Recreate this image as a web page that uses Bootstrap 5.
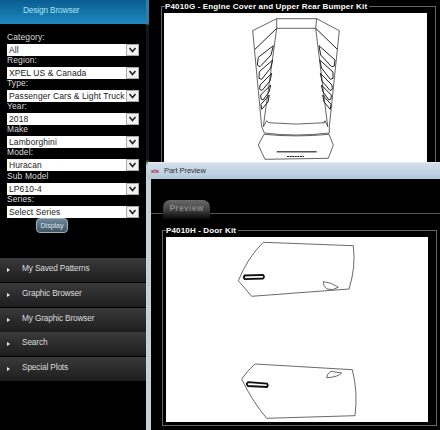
<!DOCTYPE html>
<html lang="en">
<head>
    <meta charset="UTF-8">
    <title>Design Browser</title>
    <link href="https://cdn.jsdelivr.net/npm/bootstrap@5.3.0/dist/css/bootstrap.min.css" rel="stylesheet">
    <style>
        html, body { height: 100%; margin: 0; }
        body { background: #000; font-family: "Liberation Sans", sans-serif; overflow: hidden; position: relative; width: 440px; height: 430px; }
        .app { height: 430px; }
        .side { width: 146px; background: #000; flex: none; }
        .side-head { height: 24px; background: linear-gradient(#0b5d92, #1d8ac0); color: #a9e4f2; font-size: 8.3px; letter-spacing: -.15px; line-height: 21px; padding-left: 23px; }
        .side-form { padding: 9px 7px 0; height: 234px; }
        .side-form label { display: block; color: #ddd; font-size: 8.5px; line-height: 9px; height: 11px; letter-spacing: .1px; }
        .side-form select { display: block; width: 132px; height: 12px; padding: 0 14px 0 2px; border: 0; border-radius: 0; font-family: "Liberation Sans", sans-serif; font-size: 8.5px; letter-spacing: .1px; line-height: 12px; color: #222; background-color: #fff; background-position: right 0 center; background-size: 13px 12px; background-image: url("data:image/svg+xml,%3Csvg xmlns='http://www.w3.org/2000/svg' viewBox='0 0 13 12'%3E%3Crect x='.5' y='.5' width='12' height='11' fill='%23f2f2f2' stroke='%23aaa'/%3E%3Cpath d='M3.5 4l3 3.5 3-3.5' fill='none' stroke='%23222' stroke-width='1.6'/%3E%3C/svg%3E"); }
        .sel-row { height: 23.1px; }
        .display-btn { width: 32px; height: 15px; margin: 0 0 0 29px; padding: 0; display: block; border: 1px solid #9fb0bd; border-radius: 4px; background: linear-gradient(#6e8798, #3e5565); color: #dfe6ea; font-size: 7px; line-height: 13px; }
        .side-menu .list-group-item { height: 24px; margin-bottom: .8px; padding: 0 0 0 22px; border: 0; border-radius: 0; background: linear-gradient(#3a3a3a, #1d1d1d); color: #ddd; font-size: 8.3px; letter-spacing: -.15px; line-height: 20px; position: relative; }
        .side-menu .list-group-item::before { content: ""; position: absolute; left: 7px; top: 10px; border-left: 3px solid #eee; border-top: 2px solid transparent; border-bottom: 2px solid transparent; }
        .strip { width: 3px; flex: none; background: linear-gradient(#2a80b0 0, #2a80b0 24px, #10181c 25px, #10181c 160px, #c7d2da 165px, #c7d2da 100%); }
        .main { flex: 1; padding: 0 4px 0 12px; }
        .kit-box { border: 1px solid #666; margin: 0; position: relative; }
        .kit-title { position: absolute; left: 3px; top: -6px; background: #000; color: #fff; font-weight: 700; font-size: 8px; letter-spacing: .15px; line-height: 11px; padding: 0 2px 0 0; white-space: nowrap; }
        .kit-sheet { background: #fff; }
        .kit-sheet svg { display: block; }
        .top-kit { margin-top: 6px; height: 170px; padding: 0 8px 0 2px; }
        .top-kit .kit-sheet { margin-top: 6px; height: 149px; }
        .win { position: absolute; left: 148px; top: 162px; width: 292px; height: 268px; background: #000; border-left: 3px solid #c3d1dd; }
        .win-title { height: 17px; margin-left: -3px; background: linear-gradient(#d2dfec, #b4c8dc); border-top: 1px solid #e8eef4; color: #333; font-size: 7.6px; letter-spacing: -.1px; line-height: 16px; padding-left: 16px; position: relative; }
        .win-logo { position: absolute; left: 3px; top: 3px; color: #b22; font-size: 6px; font-weight: 700; line-height: 10px; }
        .tab-bar { height: 35px; border-bottom: 1px solid #555; padding: 21px 0 0 12px; }
        .tab-pill { display: block; width: 47px; height: 20px; border-radius: 7px 7px 0 0; background: linear-gradient(#6a6a6a 0, #3a3a3a 55%, #000 100%); color: #888; font-size: 8.5px; font-weight: 700; letter-spacing: .3px; line-height: 16px; text-align: center; }
        .door-kit { margin: 16px 3px 0 11px; height: 196px; padding: 0 8px 0 3px; }
        .door-kit .kit-sheet { margin-top: 6px; height: 185px; }
    </style>
</head>
<body>
    <div class="app d-flex">
        <div class="side">
            <div class="side-head">Design Browser</div>
            <div class="side-form">
                <div class="sel-row"><label>Category:</label><select class="form-select"><option>All</option></select></div>
                <div class="sel-row"><label>Region:</label><select class="form-select"><option>XPEL US &amp; Canada</option></select></div>
                <div class="sel-row"><label>Type:</label><select class="form-select"><option>Passenger Cars &amp; Light Trucks</option></select></div>
                <div class="sel-row"><label>Year:</label><select class="form-select"><option>2018</option></select></div>
                <div class="sel-row"><label>Make</label><select class="form-select"><option>Lamborghini</option></select></div>
                <div class="sel-row"><label>Model:</label><select class="form-select"><option>Huracan</option></select></div>
                <div class="sel-row"><label>Sub Model</label><select class="form-select"><option>LP610-4</option></select></div>
                <div class="sel-row"><label>Series:</label><select class="form-select"><option>Select Series</option></select></div>
                <button class="btn display-btn" type="button">Display</button>
            </div>
            <div class="list-group side-menu">
                <div class="list-group-item">My Saved Patterns</div>
                <div class="list-group-item">Graphic Browser</div>
                <div class="list-group-item">My Graphic Browser</div>
                <div class="list-group-item">Search</div>
                <div class="list-group-item">Special Plots</div>
            </div>
        </div>
        <div class="strip"></div>
        <div class="main">
            <div class="kit-box top-kit">
                <div class="kit-title">P4010G - Engine Cover and Upper Rear Bumper Kit</div>
                <div class="kit-sheet">
                    <svg width="263" height="149" viewBox="164 13 263 149" fill="none" stroke="#222" stroke-width=".7">
                        <!-- engine cover outline -->
                        <path d="M252.7 30.7 L276.7 18.7 L316.7 18.7 L339.3 30.7 L329.3 126.7 L329.3 133 Q296 137 264.3 133 L261.7 126.7 Z"/>
                        <path d="M276.7 28.3 L315.7 28.3 M276.7 18.7 L276.7 28.3 L263.3 126.7 M316.7 18.7 L315.7 28.3 L327.7 126.7"/>
                        <path d="M276.7 28.3 L255 49.3 M315.7 28.3 L337.3 49.3" stroke-width="1"/>
                        <!-- vents left -->
                        <path d="M273.3 45.7 L258.3 57.3 L257.3 65 L260 66.7 L271 55 Z M272.7 60 L259.3 71.7 L259 78.3 L261.7 79.3 L270.5 68 Z M271.7 73.3 L260 85 L259.7 89.3 L262 90.5 L270 81 Z M270.7 85 L260.7 95 L261 99 L263 100 L269 92 Z M269.3 95 L261 104.3 L261.7 109.3 L268 102 Z" stroke-width="1"/>
                        <!-- vents right -->
                        <path d="M319 45.7 L335 60 L334.3 66 L331.7 66.7 L320.7 55 Z M319.7 60 L333 72 L333 78.3 L330.3 79.3 L321.5 68 Z M320.3 73.3 L332 85 L332.3 89.3 L330 90.5 L322 81 Z M321.3 85 L331.3 95 L331 99 L329 100 L323 92 Z M322.7 95 L331 104.3 L330.3 109.3 L324 102 Z" stroke-width="1"/>
                        <!-- bumper lip -->
                        <path d="M266.7 120.7 L263.3 126.7 M325 120.7 L328 126.7 M268.3 122.7 Q296 125.5 325 122.7 M266.7 120.7 L268.3 122.7 M325 120.7 L323.7 122.7"/>
                        <path d="M264 134.3 Q296 137.5 329 134.3 L333.3 145 L328.3 158.3 L265 159.3 L258.3 145 Z"/>
                        <path d="M276.7 151.7 L316.7 151.7" stroke-width="1.6" stroke="#555"/>
                        <path d="M287 156.5 L304 156.5" stroke-width="1.2" stroke-dasharray="2 .6"/>
                    </svg>
                </div>
            </div>
        </div>
    </div>

    <div class="win">
        <div class="win-title"><span class="win-logo">xlx</span>Part Preview</div>
        <div class="tab-bar"><span class="tab-pill">Preview</span></div>
        <div class="kit-box door-kit">
            <div class="kit-title">P4010H - Door Kit</div>
            <div class="kit-sheet">
                <svg width="263" height="185" viewBox="166 238 263 185" fill="none" stroke="#444" stroke-width=".8">
                    <!-- upper door -->
                    <path d="M263.3 243.3 L353.3 246.7 Q356 268 349 290 L251.7 297.3 L238.3 281.7 Q248 258 263.3 243.3 Z"/>
                    <path d="M244.5 276.5 L263 275.8 Q265 278 263 279.5 L245 280.2 Q243 278.5 244.5 276.5 Z" fill="#fff" stroke="#111" stroke-width="1.8"/>
                    <path d="M323.3 282.7 Q331 283 338.3 288.3 Q333 292 327 290 Q323 287 323.3 282.7 Z"/>
                    <!-- lower door -->
                    <path d="M255 365 L352.3 370.7 Q358 392 355 416.7 L266.7 419.3 Q252 402 241.7 380 Q247 372 255 365 Z"/>
                    <path d="M248 383.2 L267 384.5 Q268.5 386.5 267 388 L248 387 Q245.5 385 248 383.2 Z" fill="#fff" stroke="#111" stroke-width="1.8"/>
                    <path d="M331 372.3 L341.7 374 Q338 378 326.7 378.8 Q326.5 375 331 372.3 Z"/>
                </svg>
            </div>
        </div>
    </div>
</body>
</html>
